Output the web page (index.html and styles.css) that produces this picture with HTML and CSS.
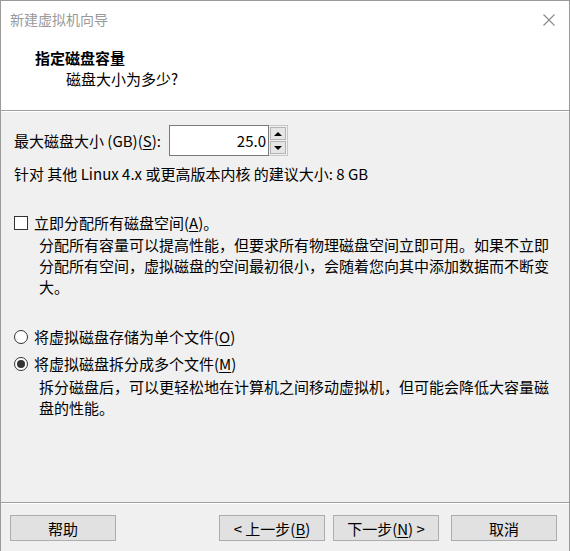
FILE: index.html
```html
<!DOCTYPE html>
<html lang="zh-CN">
<head>
<meta charset="utf-8">
<title>新建虚拟机向导</title>
<link rel="stylesheet" href="styles.css">
</head>
<body>
<div class="window">
  <div class="titlebar">
    <span class="title">新建虚拟机向导</span>
    <svg class="close" width="12" height="12" viewBox="0 0 12 12"><path d="M0.5 0.5 L11.5 11.5 M11.5 0.5 L0.5 11.5" stroke="#8a8a8a" stroke-width="1.1" fill="none"/></svg>
  </div>
  <div class="header">
    <div class="heading">指定磁盘容量</div>
    <div class="subheading">磁盘大小为多少?</div>
  </div>
  <div class="sep"></div>
  <div class="content">
    <div class="size-row">
      <span class="label">最大磁盘大小 (GB)(<u>S</u>):</span>
      <div class="spin">
        <div class="spin-field">25.0</div>
        <div class="spin-btns">
          <div class="spin-btn"><span class="tri up"></span></div>
          <div class="spin-btn"><span class="tri down"></span></div>
        </div>
      </div>
    </div>
    <div class="hint">针对 其他 Linux 4.x 或更高版本内核 的建议大小: 8 GB</div>

    <div class="option check-row">
      <span class="checkbox"></span>
      <span>立即分配所有磁盘空间(<u>A</u>)。</span>
    </div>
    <p class="desc">分配所有容量可以提高性能，但要求所有物理磁盘空间立即可用。如果不立即<br>分配所有空间，虚拟磁盘的空间最初很小，会随着您向其中添加数据而不断变<br>大。</p>

    <div class="option radio-row first">
      <span class="radio"></span>
      <span>将虚拟磁盘存储为单个文件(<u>O</u>)</span>
    </div>
    <div class="option radio-row second">
      <span class="radio checked"></span>
      <span>将虚拟磁盘拆分成多个文件(<u>M</u>)</span>
    </div>
    <p class="desc desc2">拆分磁盘后，可以更轻松地在计算机之间移动虚拟机，但可能会降低大容量磁<br>盘的性能。</p>
  </div>
  <div class="sep"></div>
  <div class="footer">
    <button class="btn">帮助</button>
    <div class="spacer"></div>
    <button class="btn">&lt; 上一步(<u>B</u>)</button>
    <button class="btn next">下一步(<u>N</u>) &gt;</button>
    <button class="btn cancel">取消</button>
  </div>
</div>
</body>
</html>
```

FILE: styles.css
```css
* { box-sizing: border-box; }
html, body {
  margin: 0;
  padding: 0;
  background: #f0f0f0;
}
body {
  font-family: "Noto Sans CJK SC", "Noto Sans", sans-serif;
  font-size: 15px;
  line-height: 21px;
  color: #000;
}
.window {
  width: 570px;
  height: 551px;
  border: 1px solid #9a9a9a;
  border-bottom: none;
  display: flex;
  flex-direction: column;
  background: #f0f0f0;
}
.titlebar {
  background: #fff;
  height: 37px;
  display: flex;
  align-items: center;
  justify-content: space-between;
  padding: 0 14px 0 9px;
}
.title {
  color: #999;
  font-size: 14px;
}
.header {
  background: #fff;
  height: 72px;
  padding: 9px 0 0 34px;
}
.heading {
  font-weight: bold;
}
.subheading {
  padding-left: 31px;
}
.sep {
  height: 2px;
  border-top: 1px solid #a0a0a0;
  border-bottom: 1px solid #fff;
}
.content {
  flex: 1;
  padding: 13px 0 0 13px;
}
.size-row {
  display: flex;
  align-items: center;
  height: 31px;
}
.label {
  margin-right: 8px;
}
.spin {
  display: flex;
  align-items: stretch;
  height: 31px;
}
.spin-field {
  width: 100px;
  background: #fff;
  border: 1px solid #7a7a7a;
  text-align: right;
  padding-right: 2px;
  line-height: 29px;
}
.spin-btns {
  width: 19px;
  display: flex;
  flex-direction: column;
  border: 1px solid #c8c8c8;
  border-left: none;
  background: #f0f0f0;
  padding: 1px;
  gap: 1px;
}
.spin-btn {
  flex: 1;
  background: #e5e5e5;
  border: 1px solid #b5b5b5;
  display: flex;
  align-items: center;
  justify-content: center;
}
.tri {
  width: 0;
  height: 0;
  border-left: 4px solid transparent;
  border-right: 4px solid transparent;
}
.tri.up { border-bottom: 4px solid #000; }
.tri.down { border-top: 4px solid #000; }
.hint {
  margin-top: 7px;
}
.option {
  display: flex;
  align-items: center;
  gap: 6px;
}
.check-row {
  margin-top: 28px;
}
.checkbox {
  width: 14px;
  height: 14px;
  background: #fff;
  border: 1px solid #333;
}
.radio {
  width: 14px;
  height: 14px;
  border-radius: 50%;
  background: #fff;
  border: 1px solid #333;
  display: flex;
  align-items: center;
  justify-content: center;
}
.radio.checked::after {
  content: "";
  width: 8px;
  height: 8px;
  border-radius: 50%;
  background: #333;
}
.desc {
  margin: 1px 0 0 25px;
  white-space: nowrap;
}
.radio-row.first {
  margin-top: 29px;
}
.radio-row.second {
  margin-top: 6px;
}
.desc2 {
  margin-top: 2px;
}
.footer {
  height: 47px;
  display: flex;
  align-items: flex-start;
  padding: 11px 12px 0 9px;
}
.spacer { flex: 1; }
.btn {
  font-family: inherit;
  font-size: 15px;
  line-height: 21px;
  color: #000;
  width: 106px;
  height: 26px;
  background: #e1e1e1;
  border: 1px solid #adadad;
  padding: 0;
  margin: 0;
}
.next { margin-left: 8px; }
.cancel { margin-left: 12px; }
u { text-underline-offset: 2px; }
```
